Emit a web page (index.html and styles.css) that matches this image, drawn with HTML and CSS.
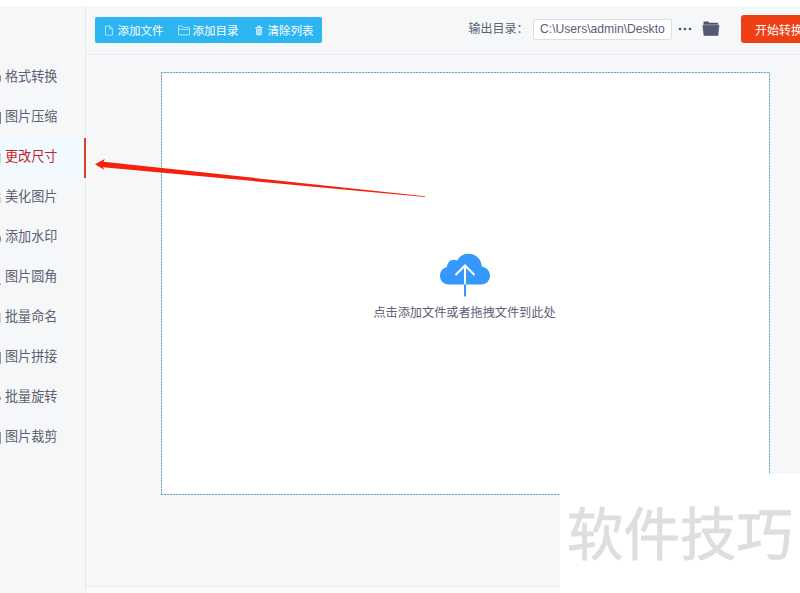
FILE: index.html
```html
<!DOCTYPE html>
<html lang="zh-CN">
<head>
<meta charset="utf-8">
<title>图片转换器</title>
<link rel="stylesheet" href="styles.css">
</head>
<body>
<div class="app">
  <nav class="sidebar">
    <a class="item"><svg class="edge" viewBox="0 0 4 14"><path d="M0 4q1.200 3 0 7"/></svg><span>格式转换</span></a>
    <a class="item"><svg class="edge" viewBox="0 0 4 14"><path d="M.5 1v12"/></svg><span>图片压缩</span></a>
    <a class="item active"><svg class="edge faint" viewBox="0 0 4 14"><path d="M0 2v10"/></svg><span>更改尺寸</span></a>
    <a class="item"><svg class="edge faint" viewBox="0 0 4 14"><path d="M0 2v2M0 6v6"/></svg><span>美化图片</span></a>
    <a class="item"><svg class="edge" viewBox="0 0 4 14"><path d="M0 5q1 3 0 6"/></svg><span>添加水印</span></a>
    <a class="item"><svg class="edge" viewBox="0 0 4 14"><path d="M0 12v2"/></svg><span>图片圆角</span></a>
    <a class="item"><svg class="edge faint" viewBox="0 0 4 14"><path d="M0 2v10"/></svg><span>批量命名</span></a>
    <a class="item"><svg class="edge" viewBox="0 0 4 14"><path d="M.3 1v12"/></svg><span>图片拼接</span></a>
    <a class="item"><svg class="edge" viewBox="0 0 4 14"><path d="M0 6q.8 1.500 0 3"/></svg><span>批量旋转</span></a>
    <a class="item"><svg class="edge" viewBox="0 0 4 14"><path d="M.3 1v12"/></svg><span>图片裁剪</span></a>
  </nav>
  <main class="main">
    <header class="toolbar">
      <div class="actions">
        <button class="action"><svg width="8" height="11" viewBox="0 0 8 11"><path d="M.5 1h4.300l2.700 2.800v6.400h-7zM4.700 1v3h2.800"/></svg><span>添加文件</span></button>
        <button class="action folder-action"><svg width="12" height="11" viewBox="0 0 12 11"><path d="M.5 1h3.600l1.200 1.400h6.200v7.500H.5zM.5 4.400h11"/></svg><span>添加目录</span></button>
        <button class="action trash-action"><svg width="8" height="11" viewBox="0 0 8 11"><path class="solid" d="M.2 2h2.100V.7h3.400V2h2.100v1.200H.2zM.9 3.800h6.200l-.4 6.500H1.300z"/><path class="slots" d="M2.700 5v4M4 5v4M5.300 5v4"/></svg><span>清除列表</span></button>
      </div>
      <div class="output">
        <span class="label">输出目录：</span>
        <div class="path">C:\Users\admin\Deskto</div>
        <svg class="more" width="14" height="4" viewBox="0 0 14 4"><circle cx="2" cy="2" r="1.300"/><circle cx="7" cy="2" r="1.300"/><circle cx="12" cy="2" r="1.300"/></svg>
        <svg class="folder" width="18" height="16" viewBox="0 0 18 16"><path d="M1.500 4V1.200Q1.500.5 2.200.5h4l1 1.200h8.300q.7 0 .7.7V4z"/><path class="front" d="M.9 3.800h16q.6 0 .5.7l-.9 9.700q-.1.8-.9.8H2.300q-.8 0-.9-.8L.4 4.500q0-.7.5-.7z"/></svg>
        <button class="start">开始转换</button>
      </div>
    </header>
    <section class="workspace">
      <div class="dropzone">
        <svg class="cloud" width="50" height="44" viewBox="0 0 50 44"><path class="cloud-body" d="M8.500 31.500C3.500 31.500 0 27.500 0 23c0-4.700 3-8 7-9C7 9.500 10.500 6.700 14 6.700c1.300 0 2.400.3 3.300.8C19.500 3 23.500.8 28.500.8c7.500 0 13 5.500 13.300 12.700 4.700.9 8.200 4.500 8.200 9 0 5-3.800 9-8.500 9z"/><path class="arrow-up" d="M25 31.500V12.500M15.500 22 25 12.500 34.500 22"/><path class="stem" d="M25 31.500V43.500"/></svg>
        <p>点击添加文件或者拖拽文件到此处</p>
      </div>
    </section>
    <footer class="status"></footer>
  </main>
</div>
<svg class="pointer" width="331" height="42" viewBox="0 0 331 42"><path d="M0 7.200 9.800 2 8.500 4.800 330 39.200V40L8 10.200 9 12.800z"/></svg>
<div class="watermark">软件技巧</div>
</body>
</html>
```
FILE: styles.css
```css
* { box-sizing: border-box; }
body {
  margin: 0;
  width: 800px;
  height: 593px;
  overflow: hidden;
  position: relative;
  background: #fff;
  color: #5b6072;
  font: 12px "Liberation Sans", "Noto Sans CJK SC", sans-serif;
}
button { border: 0; padding: 0; font: inherit; color: #fff; white-space: nowrap; }
svg { flex: none; display: block; fill: none; }
.app { display: flex; height: 593px; padding-top: 6px; }
.sidebar {
  flex: none;
  width: 86px;
  padding-top: 52px;
  background: #f5f7f9;
  border-right: 1px solid #e9ebee;
}
.item {
  display: flex;
  align-items: center;
  height: 40px;
  width: 86px;
  font-size: 13.1px;
  line-height: 20px;
}
.item span { margin-left: 1px; position: relative; top: -1px; }
.active { color: #c51f27; background: #f0faff; border-right: 2px solid #dc4125; }
.edge { width: 4px; height: 14px; stroke: #7b8090; }
.faint { opacity: .6; }
.main { flex: 1; min-width: 0; display: flex; flex-direction: column; background: #f5f7f9; }
.toolbar {
  flex: none;
  height: 49px;
  display: flex;
  align-items: flex-start;
  border-bottom: 1px solid #eaecef;
}
.actions {
  flex: none;
  display: flex;
  width: 227px;
  height: 26px;
  margin: 11px 0 0 9px;
  padding-left: 10px;
  border-radius: 2px;
  background: #2db5f2;
}
.action { display: flex; align-items: center; gap: 4.5px; background: none; font-size: 11.5px; }
.action svg { stroke: #c9edfc; stroke-width: .8; }
.action .solid { fill: #c9edfc; stroke: none; }
.action .slots { stroke: #68c9f5; stroke-width: .6; }
.folder-action { margin-left: 14px; gap: 3px; }
.trash-action { margin-left: 16.5px; }
.output { flex: none; display: flex; align-items: center; height: 46px; margin-left: 147px; }
.label { width: 64px; font-size: 12px; line-height: 18px; white-space: nowrap; position: relative; left: -.5px; }
.path {
  width: 139px;
  height: 21px;
  padding-left: 6px;
  border: 1px solid #dcdee2;
  border-radius: 2px;
  background: #fff;
  line-height: 19px;
  font-size: 12.15px;
  white-space: nowrap;
}
.more { margin-left: 6px; fill: #4c5164; }
.folder { margin-left: 10px; fill: #4e536b; }
.folder .front { fill: #535873; stroke: #f5f7f9; stroke-width: .4; }
.start {
  width: 90px;
  height: 28px;
  margin-left: 21px;
  padding-left: 14px;
  border-radius: 3px;
  background: #ef4015;
  text-align: left;
  font-size: 12px;
}
.workspace { flex: 1; padding: 17px 0 0 75px; }
.dropzone {
  width: 609px;
  height: 423px;
  display: flex;
  flex-direction: column;
  align-items: center;
  padding: 181px 2px 0 0;
  background:
    repeating-linear-gradient(90deg, #6aa9c6 0 2px, #d5e7ef 2px 3px) top / 100% 1px no-repeat,
    repeating-linear-gradient(90deg, #6aa9c6 0 2px, #d5e7ef 2px 3px) bottom / 100% 1px no-repeat,
    repeating-linear-gradient(#6aa9c6 0 2px, #d5e7ef 2px 3px) left / 1px 100% no-repeat,
    repeating-linear-gradient(#6aa9c6 0 2px, #d5e7ef 2px 3px) right / 1px 100% no-repeat,
    #fff;
}
.dropzone p { margin: 6px 0 0; font-size: 12.15px; line-height: 20px; white-space: nowrap; }
.cloud-body { fill: #3598fc; }
.arrow-up { stroke: #fff; stroke-width: 2; }
.stem { stroke: #3598fc; stroke-width: 2; }
.status { flex: none; height: 8px; background: #fafbfb; border-top: 2px solid #eff1f3; }
.pointer { position: absolute; left: 95px; top: 157px; fill: #f6200f; }
.watermark {
  position: absolute;
  left: 560px;
  top: 474px;
  width: 240px;
  height: 119px;
  padding-left: 7px;
  background: #fff;
  color: #dedede;
  -webkit-text-stroke: .8px #dedede;
  font-family: "Noto Sans CJK SC", sans-serif;
  font-size: 56.500px;
  line-height: 112px;
  white-space: nowrap;
}
```
